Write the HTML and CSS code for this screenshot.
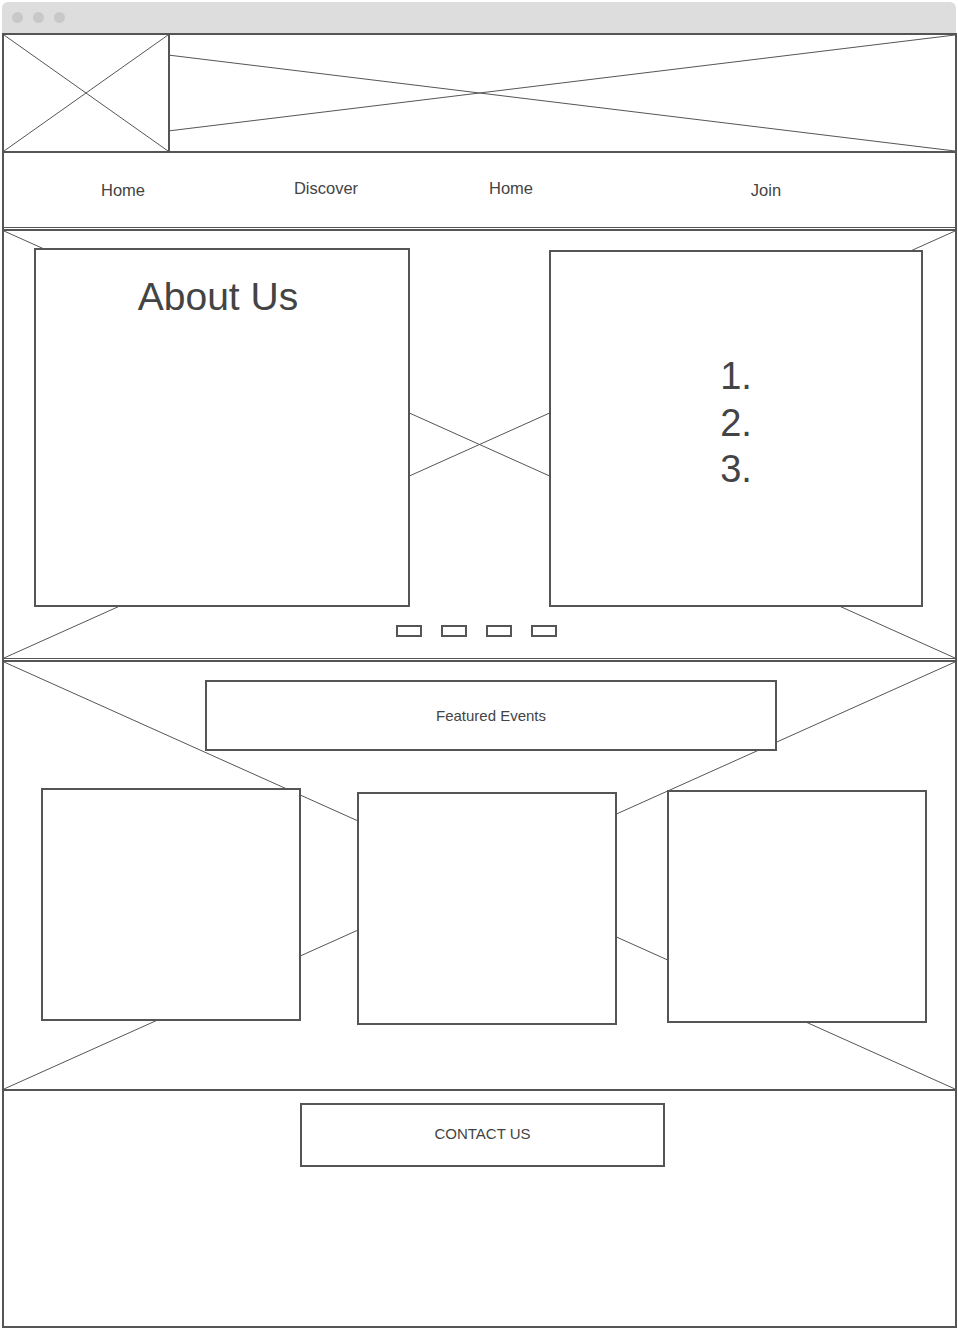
FILE: index.html
```html
<!DOCTYPE html>
<html lang="en">
<head>
    <meta charset="UTF-8">
    <meta name="viewport" content="width=device-width, initial-scale=1.0">
    <title>Wireframe - Home</title>
    <link rel="stylesheet" href="styles.css">
</head>
<body>

    <!-- Browser chrome -->
    <div class="chrome">
        <span class="chrome-dot"></span>
        <span class="chrome-dot"></span>
        <span class="chrome-dot"></span>
    </div>

    <div class="frame">

        <!-- Header: logo + banner -->
        <header class="header">
            <svg class="placeholder" viewBox="0 0 100 100" preserveAspectRatio="none">
                <line x1="0" y1="0" x2="100" y2="100" vector-effect="non-scaling-stroke"/>
                <line x1="0" y1="100" x2="100" y2="0" vector-effect="non-scaling-stroke"/>
            </svg>
            <div class="logo">
                <svg class="placeholder" viewBox="0 0 100 100" preserveAspectRatio="none">
                    <line x1="0" y1="0" x2="100" y2="100" vector-effect="non-scaling-stroke"/>
                    <line x1="0" y1="100" x2="100" y2="0" vector-effect="non-scaling-stroke"/>
                </svg>
            </div>
        </header>

        <!-- Navigation -->
        <nav class="nav">
            <a href="#" class="nav-link">Home</a>
            <a href="#" class="nav-link nav-link--up">Discover</a>
            <a href="#" class="nav-link nav-link--up">Home</a>
            <a href="#" class="nav-link">Join</a>
        </nav>

        <!-- Slider section -->
        <section class="slider">
            <svg class="placeholder" viewBox="0 0 100 100" preserveAspectRatio="none">
                <line x1="0" y1="0" x2="100" y2="100" vector-effect="non-scaling-stroke"/>
                <line x1="0" y1="100" x2="100" y2="0" vector-effect="non-scaling-stroke"/>
            </svg>
            <div class="slider-row">
                <div class="slide-box about">
                    <h2>About Us</h2>
                </div>
                <div class="slide-box steps">
                    <div>1.</div>
                    <div>2.</div>
                    <div>3.</div>
                </div>
            </div>
            <div class="dots">
                <span class="dot"></span>
                <span class="dot"></span>
                <span class="dot"></span>
                <span class="dot"></span>
            </div>
        </section>

        <!-- Featured events -->
        <section class="events">
            <svg class="placeholder" viewBox="0 0 100 100" preserveAspectRatio="none">
                <line x1="0" y1="0" x2="100" y2="100" vector-effect="non-scaling-stroke"/>
                <line x1="0" y1="100" x2="100" y2="0" vector-effect="non-scaling-stroke"/>
            </svg>
            <div class="events-title">Featured Events</div>
            <div class="card-row">
                <div class="card"></div>
                <div class="card card--second"></div>
                <div class="card card--third"></div>
            </div>
        </section>

        <!-- Contact -->
        <footer class="contact">
            <div class="contact-box">CONTACT US</div>
        </footer>

    </div>

</body>
</html>
```

FILE: styles.css
```css
body {
    font-family: "Liberation Sans", Arial, sans-serif;
    margin: 0;
    padding: 0;
    background-color: #fff;
    color: #444;
}

.chrome {
    margin: 2px 2px 0 2px;
    height: 31px;
    background-color: #dddddd;
    border-radius: 6px 6px 0 0;
    display: flex;
    align-items: center;
    gap: 10px;
    padding-left: 10px;
}

.chrome-dot {
    width: 11px;
    height: 11px;
    border-radius: 50%;
    background-color: #c8c8c8;
}

.frame {
    margin-left: 2px;
    width: 955px;
    box-sizing: border-box;
    border: 2px solid #555;
}

.placeholder {
    position: absolute;
    top: 0;
    left: 0;
    width: 100%;
    height: 100%;
    stroke: #555;
    stroke-width: 1;
}

/* Header */
.header {
    position: relative;
    height: 116px;
    border-bottom: 2px solid #555;
    display: flex;
}

.logo {
    position: relative;
    width: 166px;
    box-sizing: border-box;
    border-right: 2px solid #555;
    background-color: #fff;
}

/* Nav */
.nav {
    height: 74px;
    border-bottom: 1px solid #555;
    display: grid;
    grid-template-columns: 238px 168px 202px 308px;
    align-items: center;
}

.nav-link {
    color: #444;
    text-decoration: none;
    font-size: 16.5px;
    text-align: center;
}

.nav-link--up {
    margin-top: -4px;
}

/* Slider */
.slider {
    position: relative;
    box-sizing: border-box;
    height: 430px;
    margin-top: 1px;
    border-top: 2px solid #555;
    border-bottom: 1px solid #555;
    padding-top: 17px;
}

.slider-row {
    position: relative;
    display: flex;
    justify-content: space-between;
    align-items: flex-start;
    padding: 0 32px 0 30px;
}

.slide-box {
    box-sizing: border-box;
    border: 2px solid #555;
    background-color: #fff;
}

.about {
    width: 376px;
    height: 359px;
    padding: 25px 8px 0 0;
    text-align: center;
}

.about h2 {
    margin: 0;
    font-size: 39px;
    font-weight: normal;
    line-height: 1.15;
}

.steps {
    width: 374px;
    height: 357px;
    margin-top: 2px;
    padding-top: 101px;
    text-align: center;
    font-size: 38px;
    line-height: 46.5px;
}

.dots {
    position: relative;
    display: flex;
    justify-content: center;
    gap: 19px;
    margin-top: 18px;
    padding-right: 7px;
}

.dot {
    width: 26px;
    height: 12px;
    box-sizing: border-box;
    border: 2px solid #555;
    background-color: #fff;
}

/* Events */
.events {
    position: relative;
    box-sizing: border-box;
    height: 431px;
    margin-top: 1px;
    border-top: 2px solid #555;
    border-bottom: 2px solid #555;
    padding-top: 18px;
}

.events-title {
    position: relative;
    margin-left: 201px;
    width: 572px;
    height: 71px;
    box-sizing: border-box;
    border: 2px solid #555;
    background-color: #fff;
    display: flex;
    align-items: center;
    justify-content: center;
    font-size: 15px;
}

.card-row {
    position: relative;
    display: flex;
    align-items: flex-start;
    margin-top: 37px;
    padding-left: 37px;
}

.card {
    width: 260px;
    height: 233px;
    box-sizing: border-box;
    border: 2px solid #555;
    background-color: #fff;
}

.card--second {
    margin: 4px 0 0 56px;
}

.card--third {
    margin: 2px 0 0 50px;
}

/* Contact */
.contact {
    box-sizing: border-box;
    height: 235px;
    padding-top: 12px;
}

.contact-box {
    margin-left: 296px;
    width: 365px;
    height: 64px;
    box-sizing: border-box;
    border: 2px solid #555;
    padding-bottom: 4px;
    display: flex;
    align-items: center;
    justify-content: center;
    font-size: 15px;
}
```
